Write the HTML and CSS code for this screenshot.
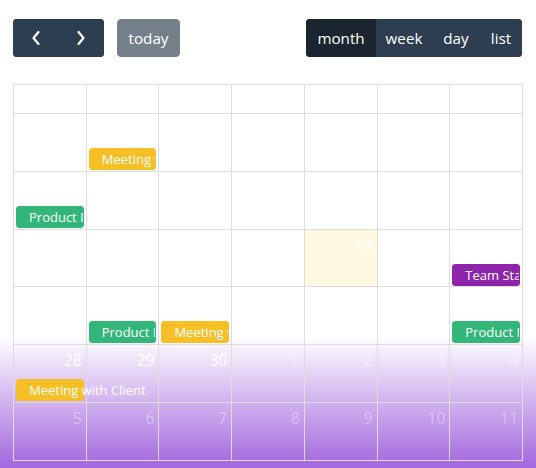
FILE: index.html
```html
<!DOCTYPE html>
<html lang="en">
<head>
<meta charset="utf-8">
<title>Calendar</title>
<link rel="stylesheet" href="styles.css">
</head>
<body>
<div class="app">
  <div class="toolbar">
    <div class="tb-left">
      <div class="group">
        <button class="btn nav" aria-label="prev">
          <svg width="12" height="18" viewBox="0 0 12 18"><path d="M8.5 3 L3.5 9 L8.5 15" fill="none" stroke="#fff" stroke-width="2.2" stroke-linecap="round" stroke-linejoin="round"/></svg>
        </button>
        <button class="btn nav" aria-label="next">
          <svg width="12" height="18" viewBox="0 0 12 18"><path d="M3.5 3 L8.5 9 L3.5 15" fill="none" stroke="#fff" stroke-width="2.2" stroke-linecap="round" stroke-linejoin="round"/></svg>
        </button>
      </div>
      <button class="btn today">today</button>
    </div>
    <div class="group">
      <button class="btn active w-month">month</button>
      <button class="btn w-week">week</button>
      <button class="btn w-day">day</button>
      <button class="btn w-list">list</button>
    </div>
  </div>

  <div class="cal">
    <div class="head">
      <div class="hcell">Sun</div><div class="hcell">Mon</div><div class="hcell">Tue</div><div class="hcell">Wed</div><div class="hcell">Thu</div><div class="hcell">Fri</div><div class="hcell">Sat</div>
    </div>
    <div class="week">
      <div class="day other"><div class="num">31</div></div>
      <div class="day"><div class="num">1</div><div class="ev yellow">Meeting with Client</div></div>
      <div class="day"><div class="num">2</div></div>
      <div class="day"><div class="num">3</div></div>
      <div class="day"><div class="num">4</div></div>
      <div class="day"><div class="num">5</div></div>
      <div class="day"><div class="num">6</div></div>
    </div>
    <div class="week">
      <div class="day"><div class="num">7</div><div class="ev green">Product Demo</div></div>
      <div class="day"><div class="num">8</div></div>
      <div class="day"><div class="num">9</div></div>
      <div class="day"><div class="num">10</div></div>
      <div class="day"><div class="num">11</div></div>
      <div class="day"><div class="num">12</div></div>
      <div class="day"><div class="num">13</div></div>
    </div>
    <div class="week">
      <div class="day"><div class="num">14</div></div>
      <div class="day"><div class="num">15</div></div>
      <div class="day"><div class="num">16</div></div>
      <div class="day"><div class="num">17</div></div>
      <div class="day today-cell"><div class="num">18</div></div>
      <div class="day"><div class="num">19</div></div>
      <div class="day"><div class="num">20</div><div class="ev purple">Team Standup</div></div>
    </div>
    <div class="week">
      <div class="day"><div class="num">21</div></div>
      <div class="day"><div class="num">22</div><div class="ev green">Product Demo</div></div>
      <div class="day"><div class="num">23</div><div class="ev yellow">Meeting with Client</div></div>
      <div class="day"><div class="num">24</div></div>
      <div class="day"><div class="num">25</div></div>
      <div class="day"><div class="num">26</div></div>
      <div class="day"><div class="num">27</div><div class="ev green">Product Demo</div></div>
    </div>
    <div class="week">
      <div class="day"><div class="num">28</div><div class="ev yellow open">Meeting with Client</div></div>
      <div class="day"><div class="num">29</div></div>
      <div class="day"><div class="num">30</div></div>
      <div class="day other"><div class="num">1</div></div>
      <div class="day other"><div class="num">2</div></div>
      <div class="day other"><div class="num">3</div></div>
      <div class="day other"><div class="num">4</div></div>
    </div>
    <div class="week">
      <div class="day other"><div class="num">5</div></div>
      <div class="day other"><div class="num">6</div></div>
      <div class="day other"><div class="num">7</div></div>
      <div class="day other"><div class="num">8</div></div>
      <div class="day other"><div class="num">9</div></div>
      <div class="day other"><div class="num">10</div></div>
      <div class="day other"><div class="num">11</div></div>
    </div>
  </div>
</div>
</body>
</html>
```
FILE: styles.css
```css
html, body {
  margin: 0;
  padding: 0;
  height: 468px;
  overflow: hidden;
}
body {
  font-family: "Open Sans", "Noto Sans", sans-serif;
  background: linear-gradient(to bottom, #ffffff 0px, #ffffff 336px, #a266de 468px);
}
.app {
  padding: 19px 14px 0 13px;
}
.toolbar {
  display: flex;
  justify-content: space-between;
  align-items: center;
  height: 38px;
  margin-bottom: 27px;
}
.tb-left {
  display: flex;
  align-items: center;
  gap: 13px;
}
.group {
  display: flex;
  border-radius: 4px;
  overflow: hidden;
}
.btn {
  font-family: inherit;
  font-size: 15.2px;
  line-height: 24px;
  color: #fff;
  background: #2c3e50;
  border: 1px solid #2c3e50;
  padding: 0;
  margin: 0;
  height: 38px;
  display: flex;
  align-items: center;
  justify-content: center;
}
.btn.nav { width: 45.5px; }
.w-month { width: 70px; }
.w-week { width: 56px; }
.w-day { width: 48px; }
.w-list { width: 42px; }
.btn.active {
  background: #1a252f;
  border-color: #1a252f;
}
.btn.today {
  background: #757f89;
  border-color: #757f89;
  border-radius: 4px;
  width: 63px;
}
.cal {
  width: 509px;
  border-left: 1px solid #dddddd;
  border-top: 1px solid #dddddd;
}
.head, .week {
  display: grid;
  grid-template-columns: repeat(7, 1fr);
}
.hcell {
  height: 28px;
  border-right: 1px solid #dddddd;
  border-bottom: 1px solid #dddddd;
  color: #fff;
  font-size: 14px;
  font-weight: 700;
  text-align: center;
  line-height: 28px;
}
.day {
  height: 56.8px;
  border-right: 1px solid #dddddd;
  border-bottom: 1px solid #dddddd;
  min-width: 0;
}
.today-cell {
  background: #fff8e1;
}
.num {
  color: #ffffff;
  font-size: 15.5px;
  line-height: 22px;
  height: 22px;
  padding: 4px 4px 0 0;
  text-align: right;
}
.day.other .num {
  color: rgba(255, 255, 255, 0.35);
}
.ev {
  margin: 8px 2px 0 2px;
  height: 20px;
  line-height: 20px;
  border: 1px solid transparent;
  border-radius: 3px;
  color: #fff;
  font-size: 13px;
  padding: 0 0 0 12px;
  white-space: nowrap;
  overflow: hidden;
}
.ev.open {
  overflow: visible;
}
.ev.yellow { background: #f6bf26; border-color: #f6bf26; }
.ev.green { background: #33b679; border-color: #33b679; }
.ev.purple { background: #8e24aa; border-color: #8e24aa; }
```
